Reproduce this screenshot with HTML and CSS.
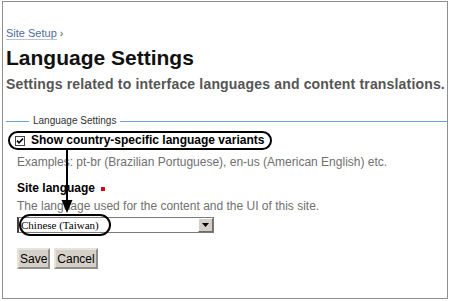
FILE: index.html
```html
<!DOCTYPE html>
<html lang="en">

<head>
    <meta charset="UTF-8">
    <title>Language Settings</title>
    <link rel="stylesheet" href="styles.css">
</head>

<body>
    <div class="frame">
        <div class="crumbs"><a href="#">Site Setup</a> <span class="sep">›</span></div>
        <h1>Language Settings</h1>
        <p class="lead">Settings related to interface languages and content translations.</p>
        <form>
            <fieldset>
                <legend>Language Settings</legend>
                <div class="field">
                    <label class="check">
                        <svg class="box" width="10" height="10" viewBox="0 0 10 10">
                            <rect x="0.5" y="0.5" width="9" height="9" fill="#fff" stroke="#444" />
                            <path d="M2 4.6 L4 6.8 L8 2.6" fill="none" stroke="#000" stroke-width="1.6" />
                        </svg>
                        Show country-specific language variants
                    </label>
                    <div class="help">Examples: pt-br (Brazilian Portuguese), en-us (American English) etc.</div>
                </div>
                <div class="field">
                    <div class="title">Site language <span class="req"></span></div>
                    <div class="help">The language used for the content and the UI of this site.</div>
                    <div class="select">
                        <span class="value">Chinese (Taiwan)</span>
                        <span class="ring"></span>
                        <span class="drop">
                            <svg width="7" height="4" viewBox="0 0 7 4"><path d="M0 0 H7 L3.5 4 Z" fill="#000" /></svg>
                        </span>
                    </div>
                </div>
                <div class="actions">
                    <button type="button">Save</button>
                    <button type="button">Cancel</button>
                </div>
            </fieldset>
        </form>
        <!-- callout arrow drawn over the form -->
        <svg class="arrow" width="450" height="301" viewBox="0 0 450 301">
            <line x1="67" y1="150" x2="67" y2="203" stroke="#000" stroke-width="2" />
            <polygon points="61.5,200 72.5,200 67,213" fill="#000" />
        </svg>
    </div>
</body>

</html>
```

FILE: styles.css
```css
html,
body {
    margin: 0;
    padding: 0;
    background: #fff;
    font-family: 'Liberation Sans', Arial, Helvetica, sans-serif;
}

.frame {
    position: relative;
    box-sizing: border-box;
    width: 446px;
    height: 298px;
    margin: 1px 0 0 2px;
    padding: 25px 0 0 3px;
    border: 1px solid #8f8f8f;
}

.crumbs {
    font-size: 11px;
    line-height: 13px;
    color: #4d6c99;
}

.crumbs a {
    color: #4d6c99;
    text-decoration: none;
    border-bottom: 1px solid #b9c3d1;
}

.crumbs .sep {
    color: #555;
}

h1 {
    margin: 6px 0 0;
    font-size: 21px;
    line-height: 24px;
    color: #111;
}

.lead {
    margin: 6px 0 0;
    font-size: 14px;
    line-height: 17px;
    font-weight: bold;
    letter-spacing: 0.17px;
    color: #555;
}

form {
    margin-top: 22px;
}

fieldset {
    margin: 0;
    padding: 0 0 0 11px;
    border: 0;
    border-top: 1px solid #6ea0d2;
}

legend {
    margin-left: 12px;
    padding: 0 4px;
    font-size: 10px;
    line-height: 12px;
    color: #333;
}

.field + .field {
    margin-top: 11px;
}

.check {
    display: inline-flex;
    align-items: center;
    gap: 6px;
    margin: 4px 0 0 -9px;
    padding: 0 6px 0 5px;
    border: 2px solid #000;
    border-radius: 10px;
    font-size: 12px;
    line-height: 15px;
    font-weight: bold;
    color: #000;
}

.box {
    display: block;
}

.help {
    margin-top: 3px;
    font-size: 12px;
    line-height: 15px;
    color: #707070;
}

.check + .help {
    margin-top: 5px;
}

.title {
    font-size: 12px;
    line-height: 15px;
    font-weight: bold;
    color: #000;
}

.req {
    display: inline-block;
    width: 4px;
    height: 4px;
    margin-left: 3px;
    vertical-align: 1px;
    background: #d9001b;
}

.select {
    position: relative;
    display: flex;
    align-items: center;
    box-sizing: border-box;
    width: 197px;
    height: 16px;
    margin-top: 3px;
    border: 1px solid #7b7b7b;
    border-left: 2px solid #404040;
    background: #fff;
}

.value {
    flex: 1;
    padding-left: 2px;
    font-family: 'Liberation Serif', 'Times New Roman', serif;
    font-size: 11px;
    line-height: 14px;
    color: #000;
}

.ring {
    position: absolute;
    left: 0;
    top: -4px;
    width: 88px;
    height: 18px;
    border: 2px solid #000;
    border-radius: 11px;
}

.drop {
    display: flex;
    align-items: center;
    justify-content: center;
    box-sizing: border-box;
    width: 15px;
    height: 14px;
    border: 1px solid;
    border-color: #fff #6d6d6d #6d6d6d #fff;
    background: #d4d0c8;
}

.drop svg {
    display: block;
}

.actions {
    display: flex;
    gap: 4px;
    margin-top: 15px;
}

.actions button {
    height: 21px;
    padding: 0 1px;
    border: 2px outset #e6e3dd;
    border-radius: 0;
    background: #d4d0c8;
    font-family: 'Liberation Sans', Arial, sans-serif;
    font-size: 12px;
    color: #000;
}

.arrow {
    position: absolute;
    left: -3px;
    top: -2px;
    pointer-events: none;
}
```
